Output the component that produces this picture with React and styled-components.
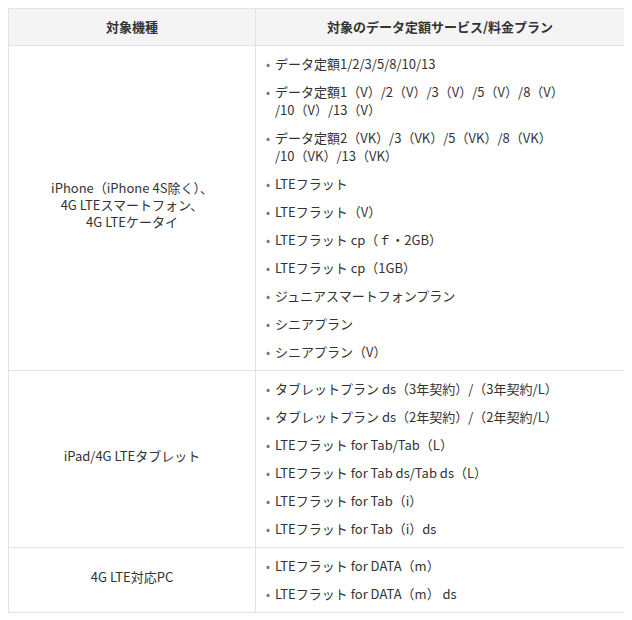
import styled, { createGlobalStyle } from "styled-components";

const GlobalStyle = createGlobalStyle`
  body {
    margin: 8px;
    background: #fff;
    font-family: "Noto Sans CJK JP", "Noto Sans", sans-serif;
    color: #333;
  }
`;

// 折り返し位置は元の表に合わせて行ごとに分けておく
const rows = [
  {
    device: ["iPhone（iPhone 4S除く）、", "4G LTEスマートフォン、", "4G LTEケータイ"],
    plans: [
      ["データ定額1/2/3/5/8/10/13"],
      ["データ定額1（V）/2（V）/3（V）/5（V）/8（V）", "/10（V）/13（V）"],
      ["データ定額2（VK）/3（VK）/5（VK）/8（VK）", "/10（VK）/13（VK）"],
      ["LTEフラット"],
      ["LTEフラット（V）"],
      ["LTEフラット cp（ｆ・2GB）"],
      ["LTEフラット cp（1GB）"],
      ["ジュニアスマートフォンプラン"],
      ["シニアプラン"],
      ["シニアプラン（V）"],
    ],
  },
  {
    device: ["iPad/4G LTEタブレット"],
    plans: [
      ["タブレットプラン ds（3年契約）/（3年契約/L）"],
      ["タブレットプラン ds（2年契約）/（2年契約/L）"],
      ["LTEフラット for Tab/Tab（L）"],
      ["LTEフラット for Tab ds/Tab ds（L）"],
      ["LTEフラット for Tab（i）"],
      ["LTEフラット for Tab（i）ds"],
    ],
  },
  {
    device: ["4G LTE対応PC"],
    plans: [["LTEフラット for DATA（m）"], ["LTEフラット for DATA（m） ds"]],
  },
];

const App = () => {
  return (
    <>
      <GlobalStyle />
      <Table>
        <colgroup>
          <col style={{ width: 247 }} />
          <col />
        </colgroup>
        <thead>
          <tr>
            <Th>対象機種</Th>
            <Th>対象のデータ定額サービス/料金プラン</Th>
          </tr>
        </thead>
        <tbody>
          {rows.map((row, idx) => (
            <tr key={idx}>
              <DeviceCell>
                {row.device.map((line, i) => (
                  <DeviceLine key={i}>{line}</DeviceLine>
                ))}
              </DeviceCell>
              <PlanCell>
                <PlanList>
                  {row.plans.map((lines, i) => (
                    <PlanItem key={i}>
                      {lines.map((l, j) => (
                        <span key={j}>
                          {j > 0 && <br />}
                          {l}
                        </span>
                      ))}
                    </PlanItem>
                  ))}
                </PlanList>
              </PlanCell>
            </tr>
          ))}
        </tbody>
      </Table>
    </>
  );
};

export default App;

const Table = styled.table`
  width: 617px;
  border-collapse: collapse;
  table-layout: fixed;
  font-size: 13px;
  line-height: 18px;
`;

const Th = styled.th`
  background: #f4f4f4;
  border: 1px solid #e2e2e2;
  padding: 9px 10px;
  font-weight: bold;
  color: #333;
  text-align: center;
`;

const DeviceCell = styled.td`
  border: 1px solid #e2e2e2;
  padding: 0 10px 8px;
  text-align: center;
  vertical-align: middle;
`;

const DeviceLine = styled.div`
  line-height: 17px;
`;

const PlanCell = styled.td`
  border: 1px solid #e2e2e2;
  padding: 9px 10px;
  vertical-align: top;
`;

const PlanList = styled.ul`
  list-style: none;
  margin: 0;
  padding: 0;
  display: flex;
  flex-direction: column;
  gap: 10px;
`;

const PlanItem = styled.li`
  padding-left: 9px;
  text-indent: -9px;
  white-space: nowrap;

  &::before {
    content: "•";
    display: inline-block;
    width: 9px;
    text-indent: 0;
    color: #777;
    font-size: 12px;
  }
`;
